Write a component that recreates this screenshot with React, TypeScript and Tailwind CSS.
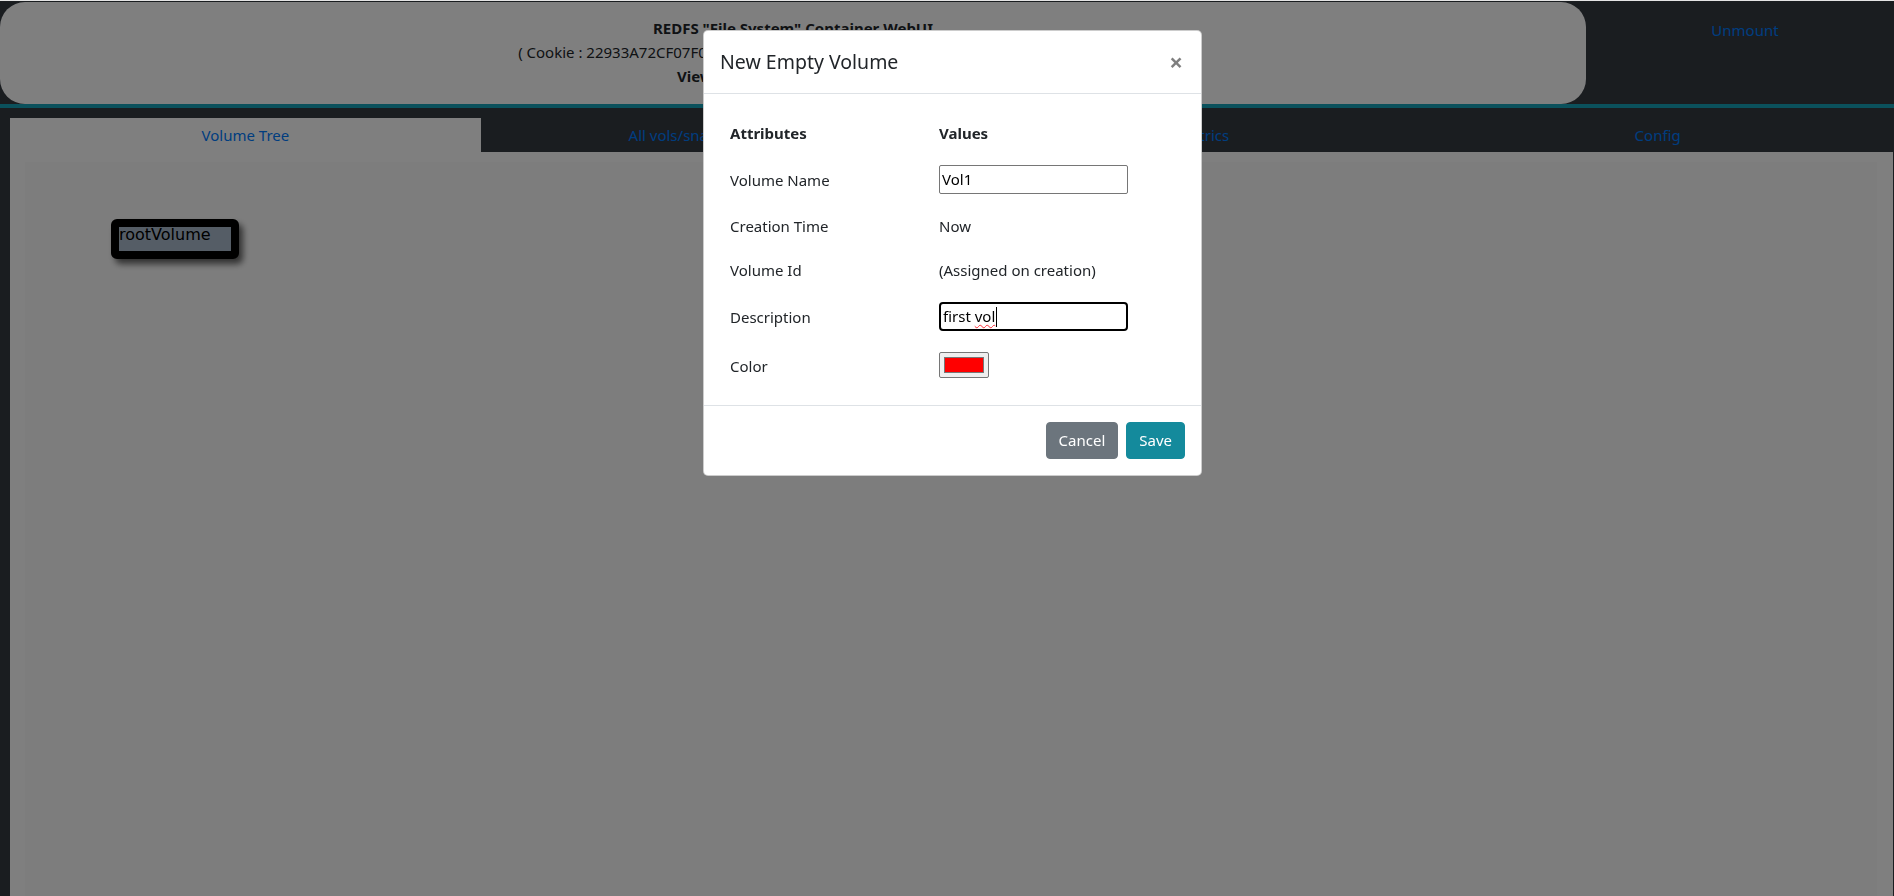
import React from "react";

export default function App() {
  return (
    <div className="relative flex h-[896px] w-full flex-col overflow-hidden bg-[#343a40] font-['Noto_Sans',sans-serif] text-[15px] text-[#212529]">
      {/* header row */}
      <div className="flex pt-[2px]">
        <div className="flex h-[102px] w-[1586px] flex-col items-center rounded-[25px] bg-white pt-[14px] leading-6">
          <div className="font-bold">REDFS "File System" Container WebUI</div>
          <div>( Cookie : 22933A72CF07F0E4B1D2A6C3F9E8B7A5 , Session started at 10:42:1 )</div>
          <div className="font-bold">Viewing : Volume Management</div>
        </div>
        <div className="flex-1 pl-[10px] pt-[16px] text-center leading-6">
          <a className="text-[#007bff]">Unmount</a>
        </div>
      </div>
      <div className="h-1 bg-[#17a2b8]" />
      <div className="h-[10px]" />
      {/* tabs */}
      <div className="flex pl-[10px] pr-px">
        <div className="flex h-[34px] flex-1 items-center justify-center bg-white text-[#007bff]">Volume Tree</div>
        <div className="flex h-[34px] flex-1 items-center justify-center text-[#007bff]">All vols/snapshots (table)</div>
        <div className="flex h-[34px] flex-1 items-center justify-center text-[#007bff]">Perf Metrics</div>
        <div className="flex h-[34px] flex-1 items-center justify-center text-[#007bff]">Config</div>
      </div>
      {/* content */}
      <div className="ml-[10px] mr-px flex flex-1 flex-col bg-white pl-[15px] pr-[16px] pt-[10px]">
        <div className="relative flex-1 bg-[#fbfbfb]">
          <div className="absolute left-[86px] top-[57px] rounded-[6px] border-[8px] border-black bg-black shadow-[4px_5px_6px_rgba(0,0,0,0.6)]">
            <div className="h-[24px] w-[112px] bg-[#aabbcc] font-['DejaVu_Sans',sans-serif] text-[16px] leading-[16px] text-black">
              rootVolume
            </div>
          </div>
        </div>
      </div>

      {/* backdrop */}
      <div className="fixed inset-0 z-40 bg-black/50" />
      {/* top light line */}
      <div className="fixed left-0 right-0 top-0 z-[60] h-px bg-[#e4e4e4]" />

      {/* modal */}
      <div className="fixed inset-0 z-50 flex items-start justify-center pl-[11px] pt-[30px]">
        <div className="w-[499px] rounded-[5px] border border-black/20 bg-white">
          <div className="flex items-center justify-between border-b border-[#dee2e6] px-4 py-4">
            <div className="text-[19.5px] leading-[30px] text-[#212529]">New Empty Volume</div>
            <div className="mr-[2px] text-[24px] font-bold leading-none text-black/50">×</div>
          </div>
          <div className="px-4 pb-[15px] pt-[17px]">
            <table className="w-full border-collapse">
              <tbody>
                <tr>
                  <td className="w-[209px] px-[10px] py-[10px] align-middle font-bold leading-6">Attributes</td>
                  <td className="px-[10px] py-[10px] align-middle font-bold leading-6">Values</td>
                </tr>
                <tr>
                  <td className="px-[10px] py-[10px] align-middle leading-6">Volume Name</td>
                  <td className="px-[10px] py-[10px] align-middle">
                    <div className="flex h-[29px] w-[189px] items-center rounded-[2px] border border-[#767676] px-[2px] text-black">
                      Vol1
                    </div>
                  </td>
                </tr>
                <tr>
                  <td className="px-[10px] py-[10px] align-middle leading-6">Creation Time</td>
                  <td className="px-[10px] py-[10px] align-middle leading-6">Now</td>
                </tr>
                <tr>
                  <td className="px-[10px] py-[10px] align-middle leading-6">Volume Id</td>
                  <td className="px-[10px] py-[10px] align-middle leading-6">(Assigned on creation)</td>
                </tr>
                <tr>
                  <td className="px-[10px] py-[10px] align-middle leading-6">Description</td>
                  <td className="px-[10px] py-[10px] align-middle">
                    <div className="flex h-[29px] w-[189px] items-center rounded-[4px] border-2 border-black px-[2px] text-black">
                      <span className="whitespace-pre">first </span>
                      <span className="underline decoration-red-500 decoration-wavy decoration-1 underline-offset-2">vol</span>
                      <span className="ml-px h-[20px] w-px bg-black" />
                    </div>
                  </td>
                </tr>
                <tr>
                  <td className="px-[10px] py-[10px] align-middle leading-6">Color</td>
                  <td className="px-[10px] py-[10px] align-middle">
                    <div className="h-[29px] pt-px">
                      <div className="h-[26px] w-[50px] rounded-[2px] border border-[#767676] bg-[#efefef] p-[4px]">
                        <div className="h-[16px] w-[40px] border border-[#777777] bg-[#ff0000]" />
                      </div>
                    </div>
                  </td>
                </tr>
              </tbody>
            </table>
          </div>
          <div className="flex justify-end gap-2 border-t border-[#dee2e6] p-4">
            <button className="h-[37px] rounded-[4px] border border-[#6c757d] bg-[#6c757d] px-3 text-white">Cancel</button>
            <button className="h-[37px] rounded-[4px] border border-[#148a9c] bg-[#148a9c] px-3 text-white">Save</button>
          </div>
        </div>
      </div>
    </div>
  );
}
